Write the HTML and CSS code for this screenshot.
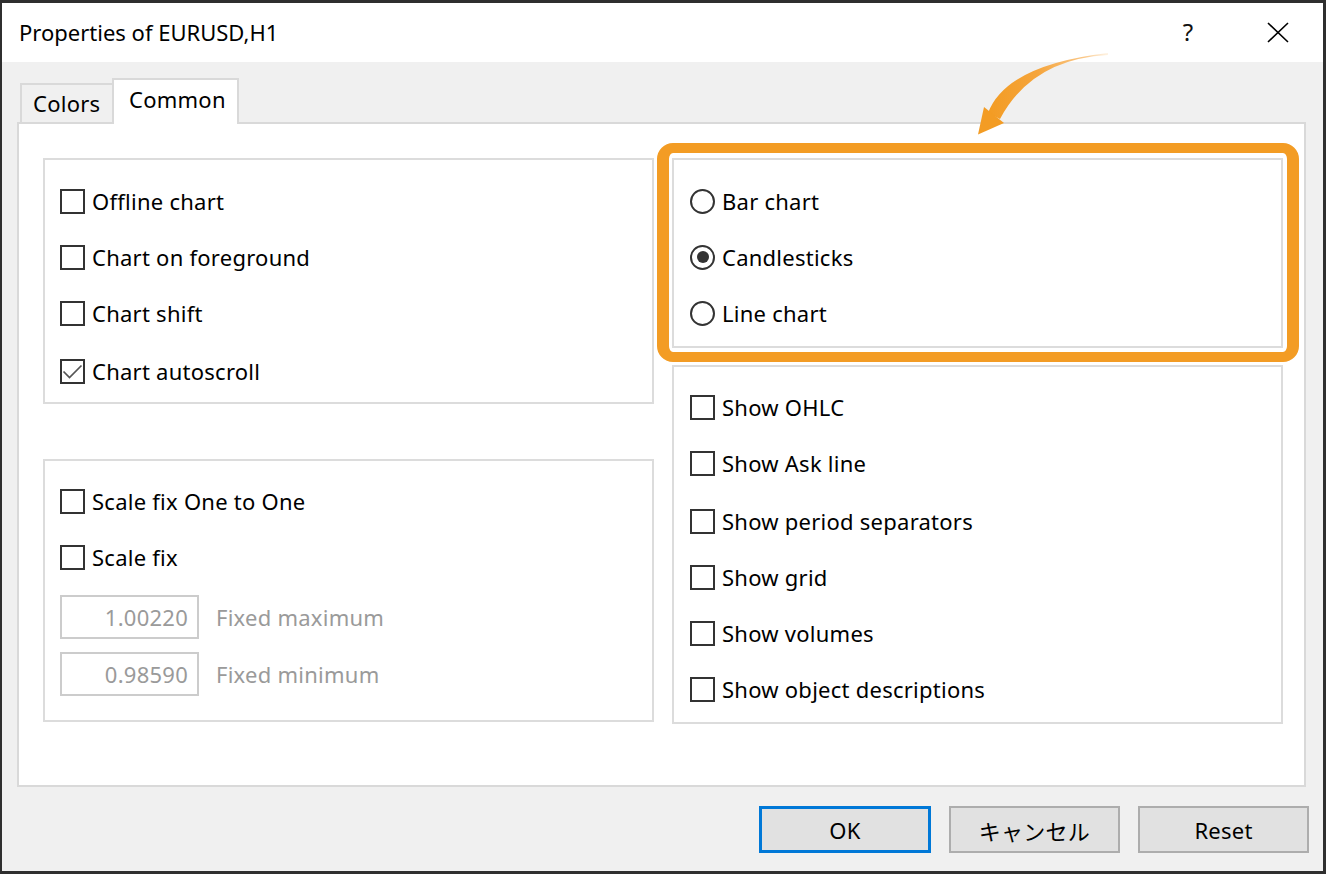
FILE: index.html
```html
<!doctype html>
<html lang="en">
	<head>
		<meta http-equiv="Content-Type" content="text/html; charset=utf-8">
		<title>Properties of EURUSD,H1</title>
		<link rel="stylesheet" href="styles.css">
	</head>
	<body>
	<div class="window">
		<div class="titlebar">
			<span class="title">Properties of EURUSD,H1</span>
			<span class="title-btn help">?</span>
			<span class="title-btn close">
				<svg width="22" height="21" viewBox="0 0 22 21"><path d="M1 1L21 20M21 1L1 20" stroke="#000" stroke-width="1.6" fill="none"/></svg>
			</span>
		</div>

		<div class="client">
			<div class="tabs">
				<div class="tab">Colors</div>
				<div class="tab active">Common</div>
			</div>

			<div class="panel">
				<div class="col left">
					<div class="group g-view">
						<label class="row"><span class="box"></span>Offline chart</label>
						<label class="row"><span class="box"></span>Chart on foreground</label>
						<label class="row"><span class="box"></span>Chart shift</label>
						<label class="row lower"><span class="box checked"><svg width="21" height="21" viewBox="0 0 21 21"><path d="M1.5 10.5L7.5 16.5L19.5 4.5" stroke="#555" stroke-width="1.7" fill="none"/></svg></span>Chart autoscroll</label>
					</div>
					<div class="group g-scale">
						<label class="row"><span class="box"></span>Scale fix One to One</label>
						<label class="row"><span class="box"></span>Scale fix</label>
						<div class="field"><span class="input">1.00220</span><span class="muted">Fixed maximum</span></div>
						<div class="field second"><span class="input">0.98590</span><span class="muted">Fixed minimum</span></div>
					</div>
				</div>
				<div class="col right">
					<div class="group g-type">
						<label class="row"><span class="radio"></span>Bar chart</label>
						<label class="row"><span class="radio on"></span>Candlesticks</label>
						<label class="row"><span class="radio"></span>Line chart</label>
					</div>
					<div class="group g-show">
						<label class="row"><span class="box"></span>Show OHLC</label>
						<label class="row"><span class="box"></span>Show Ask line</label>
						<label class="row lower"><span class="box"></span>Show period separators</label>
						<label class="row"><span class="box"></span>Show grid</label>
						<label class="row"><span class="box"></span>Show volumes</label>
						<label class="row"><span class="box"></span>Show object descriptions</label>
					</div>
				</div>
			</div>

			<div class="buttons">
				<span class="btn default">OK</span>
				<span class="btn">キャンセル</span>
				<span class="btn">Reset</span>
			</div>
		</div>

		<!-- annotation -->
		<div class="highlight"></div>
		<svg class="arrow" width="140" height="90" viewBox="975 50 140 90">
			<defs>
				<linearGradient id="fade" x1="990" y1="0" x2="1110" y2="0" gradientUnits="userSpaceOnUse">
					<stop offset="0" stop-color="#f39c24"/>
					<stop offset="0.4" stop-color="#f5a53c"/>
					<stop offset="0.8" stop-color="#fac88a"/>
					<stop offset="1" stop-color="#fdebd2" stop-opacity="0.5"/>
				</linearGradient>
			</defs>
			<path d="M988 113Q1006 65 1108 53L1108 55Q1032 59 1000 119Z" fill="url(#fade)"/>
			<path d="M978 134.5L984 107L1004 123Z" fill="#f39c24"/>
		</svg>
	</div>
	</body>
</html>
```

FILE: styles.css
```css
*{margin: 0;padding: 0;box-sizing: border-box;}
body{
	font-family: "Noto Sans", "Noto Sans CJK JP", sans-serif;
	font-size: 22px;
	color: #000;
	background: #2f2f2f;
}

.window{
	position: relative;
	width: 1326px;
	height: 874px;
	border-style: solid;
	border-color: #2f2f2f;
	border-width: 3px 3px 3px 2px;
	background: #f0f0f0;
	display: flex;
	flex-direction: column;
}

/* title bar */
.titlebar{
	height: 59px;
	background: #fff;
	display: flex;
	align-items: center;
	padding-left: 17px;
}
.title{
	flex: 1;
	margin-top: -2px;
}
.title-btn{
	width: 90px;
	height: 59px;
	display: flex;
	align-items: center;
	justify-content: center;
}
.help{
	font-size: 24px;
	color: #111;
	margin-top: -2px;
}

/* client area */
.client{
	flex: 1;
	display: flex;
	flex-direction: column;
	padding: 16px 17px 0 15px;
	letter-spacing: 0.25px;
}
.tabs{
	display: flex;
	align-items: flex-end;
	height: 46px;
	padding-left: 3px;
	margin-bottom: -2px;
	position: relative;
	z-index: 1;
}
.tab{
	width: 95px;
	height: 39px;
	margin-bottom: 2px;
	border: 2px solid #d9d9d9;
	border-bottom: none;
	padding-left: 11px;
	line-height: 36px;
}
.tab.active{
	width: 127px;
	height: 46px;
	margin-bottom: 0;
	margin-left: -3px;
	padding-left: 15px;
	background: #fff;
	line-height: 38px;
}

.panel{
	height: 665px;
	background: #fff;
	border: 2px solid #d9d9d9;
	display: flex;
	gap: 18px;
	padding: 34px 0 0 24px;
}
.col{
	width: 611px;
	display: flex;
	flex-direction: column;
}
.col.left{gap: 55px;}
.col.right{gap: 17px;}

.group{
	border: 2px solid #dcdcdc;
}
.g-view{height: 246px;padding: 13px 0 0 15px;}
.g-scale{height: 263px;padding: 12px 0 0 15px;}
.g-type{height: 190px;padding: 13px 0 0 16px;}
.g-show{height: 359px;padding: 12px 0 0 16px;}

.row{
	height: 56px;
	display: flex;
	align-items: center;
	gap: 7px;
}
.row.lower{margin-top: 2px;}

.box{
	width: 25px;
	height: 25px;
	border: 2px solid #333;
	background: #fff;
	display: flex;
}
.radio{
	width: 25px;
	height: 25px;
	border: 2px solid #333;
	border-radius: 50%;
	display: flex;
	align-items: center;
	justify-content: center;
}
.radio.on:after{
	content: "";
	width: 12px;
	height: 12px;
	border-radius: 50%;
	background: #333;
}

.field{
	display: flex;
	align-items: center;
	gap: 17px;
	margin-top: 10px;
}
.field.second{margin-top: 13px;}
.input{
	width: 139px;
	height: 44px;
	border: 2px solid #cccccc;
	text-align: right;
	padding-right: 9px;
	line-height: 40px;
	color: #9a9a9a;
}
.muted{color: #9a9a9a;}

/* buttons */
.buttons{
	display: flex;
	justify-content: flex-end;
	gap: 18px;
	margin: 19px -3px 0 0;
}
.btn{
	width: 171px;
	height: 47px;
	background: #e1e1e1;
	border: 2px solid #adadad;
	display: flex;
	align-items: center;
	justify-content: center;
}
.btn.default{
	width: 172px;
	border: 3px solid #0078d7;
}

/* orange call-out over the chart type group */
.highlight{
	position: absolute;
	left: 655px;
	top: 140px;
	width: 642px;
	height: 219px;
	border: 10px solid #f39c24;
	border-left-width: 12px;
	border-right-width: 12px;
	border-radius: 16px;
}
.arrow{
	position: absolute;
	left: 973px;
	top: 47px;
}
```
